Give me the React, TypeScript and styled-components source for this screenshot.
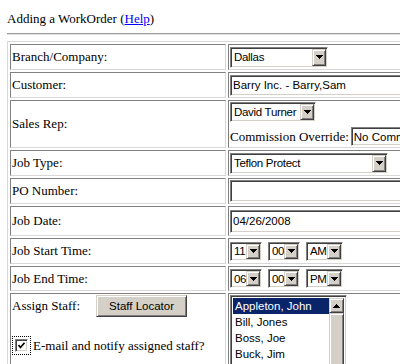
import React from "react";
import styled, { createGlobalStyle, css } from "styled-components";

const Global = createGlobalStyle`
  html, body {
    margin: 0;
    padding: 0;
    background: #ffffff;
    overflow: hidden;
  }
  body {
    font-family: "Liberation Serif", "Times New Roman", serif;
    font-size: 13px;
    color: #000000;
  }
`;

// classic windows sunken field
const sunken = css`
  box-sizing: border-box;
  border: 1px solid;
  border-color: #808080 #ffffff #ffffff #808080;
  box-shadow: inset 1px 1px 0 #404040, inset -1px -1px 0 #d4d0c8;
  background: #ffffff;
`;

const raised = css`
  box-sizing: border-box;
  border: 1px solid;
  border-color: #d4d0c8 #404040 #404040 #d4d0c8;
  box-shadow: inset 1px 1px 0 #ffffff, inset -1px -1px 0 #808080;
  background: #d4d0c8;
`;

const sansText = css`
  font-family: "Liberation Sans", Arial, sans-serif;
  font-size: 11.5px;
`;

const Page = styled.div`
  padding: 11px 0 0 7px;
  width: 540px;
`;

const Title = styled.div`
  line-height: 16px;
  height: 16px;
`;

const HelpLink = styled.a`
  color: #0000ff;
  text-decoration: underline;
`;

const Rule = styled.div`
  margin-top: 6px;
  border-top: 1px solid #9c9c9c;
  border-bottom: 1px solid #e2e2e2;
`;

const FormGrid = styled.div`
  margin-top: 6px;
  display: grid;
  grid-template-columns: 216px 250px;
  grid-template-rows: 26px 26px 48px 26px 26px 30px 26px 25px 120px;
  gap: 2px;
  padding: 2px;
  width: max-content;
  border: 1px solid;
  border-color: #d8d8d8 #808080 #808080 #d8d8d8;
`;

const cellBase = css`
  box-sizing: border-box;
  border: 1px solid;
  border-color: #808080 #d8d8d8 #d8d8d8 #808080;
  padding: 1px;
  overflow: hidden;
`;

const LabelCell = styled.div`
  ${cellBase};
  display: flex;
  align-items: center;
  white-space: nowrap;
`;

const FieldCell = styled.div<{ $gap?: number }>`
  ${cellBase};
  display: flex;
  align-items: center;
  gap: ${(p) => p.$gap ?? 0}px;
`;

const StackCell = styled.div<{ $top?: boolean }>`
  ${cellBase};
  display: flex;
  flex-direction: column;
  justify-content: ${(p) => (p.$top ? "flex-start" : "center")};
  align-items: flex-start;
  gap: 5px;
`;

const SelectBox = styled.div<{ $w: number; $h: number }>`
  ${sunken};
  ${sansText};
  width: ${(p) => p.$w}px;
  height: ${(p) => p.$h}px;
  flex: none;
  display: flex;
  align-items: stretch;
  padding: 1px;
`;

const SelectText = styled.span`
  flex: 1;
  display: flex;
  align-items: center;
  padding-left: 2px;
  letter-spacing: -0.3px;
  white-space: nowrap;
  overflow: hidden;
`;

const DropButton = styled.span`
  ${raised};
  width: 14px;
  flex: none;
  display: flex;
  align-items: center;
  justify-content: center;
`;

const TextField = styled.input<{ $w: number; $h: number }>`
  ${sunken};
  ${sansText};
  width: ${(p) => p.$w}px;
  height: ${(p) => p.$h}px;
  flex: none;
  margin: 0;
  padding: 0 2px;
  color: #000;
  outline: none;
`;

const InlineRow = styled.div`
  display: flex;
  align-items: center;
  gap: 2px;
  white-space: nowrap;
`;

const AssignLine = styled.div`
  display: flex;
  align-items: center;
  gap: 16px;
  height: 22px;
  white-space: nowrap;
`;

const PushButton = styled.button`
  ${raised};
  ${sansText};
  width: 91px;
  height: 22px;
  margin: 0;
  padding: 0;
  color: #000;
`;

const NotifyLine = styled.label`
  margin-top: 14px;
  display: flex;
  align-items: center;
  gap: 2px;
  white-space: nowrap;
`;

const FocusRing = styled.span`
  border: 1px dotted #000;
  padding: 2px;
  display: flex;
`;

const CheckBox = styled.span`
  ${sunken};
  width: 13px;
  height: 13px;
  display: flex;
  align-items: center;
  justify-content: center;
`;

const ListBox = styled.div`
  ${sunken};
  ${sansText};
  width: 117px;
  height: 110px;
  flex: none;
  display: flex;
  padding: 2px;
`;

const ListItems = styled.div`
  flex: 1;
  overflow: hidden;
`;

const ListItem = styled.div<{ $selected?: boolean }>`
  height: 16px;
  line-height: 16px;
  padding-left: 2px;
  white-space: nowrap;
  background: ${(p) => (p.$selected ? "#0a246a" : "transparent")};
  color: ${(p) => (p.$selected ? "#ffffff" : "#000000")};
`;

const ScrollBar = styled.div`
  width: 15px;
  flex: none;
  display: flex;
  flex-direction: column;
  background: #e8e6e2;
`;

const ScrollButton = styled.div`
  ${raised};
  height: 15px;
  flex: none;
  display: flex;
  align-items: center;
  justify-content: center;
`;

const ScrollThumb = styled.div`
  ${raised};
  flex: 1;
`;

function DownArrow() {
  return (
    <svg width="7" height="4" viewBox="0 0 7 4" shapeRendering="crispEdges">
      <polygon points="0,0 7,0 3.5,4" fill="#000" />
    </svg>
  );
}

function UpArrow() {
  return (
    <svg width="7" height="4" viewBox="0 0 7 4" shapeRendering="crispEdges">
      <polygon points="0,4 7,4 3.5,0" fill="#000" />
    </svg>
  );
}

function Select({ value, w, h = 21 }: { value: string; w: number; h?: number }) {
  return (
    <SelectBox $w={w} $h={h}>
      <SelectText>{value}</SelectText>
      <DropButton>
        <DownArrow />
      </DropButton>
    </SelectBox>
  );
}

const staff = ["Appleton, John", "Bill, Jones", "Boss, Joe", "Buck, Jim", "Christie, Charlie", "Davis, Ann"];

export default function App() {
  return (
    <Page>
      <Global />
      <Title>
        Adding a WorkOrder (<HelpLink href="#">Help</HelpLink>)
      </Title>
      <Rule />
      <FormGrid>
        <LabelCell>Branch/Company:</LabelCell>
        <FieldCell>
          <Select value="Dallas" w={98} />
        </FieldCell>

        <LabelCell>Customer:</LabelCell>
        <FieldCell>
          <TextField $w={240} $h={21} readOnly value="Barry Inc. - Barry,Sam" />
        </FieldCell>

        <LabelCell>Sales Rep:</LabelCell>
        <StackCell>
          <Select value="David Turner" w={86} h={20} />
          <InlineRow>
            Commission Override:
            <TextField $w={110} $h={19} readOnly value="No Commission" />
          </InlineRow>
        </StackCell>

        <LabelCell>Job Type:</LabelCell>
        <FieldCell>
          <Select value="Teflon Protect" w={158} />
        </FieldCell>

        <LabelCell>PO Number:</LabelCell>
        <FieldCell>
          <TextField $w={240} $h={22} readOnly value="" />
        </FieldCell>

        <LabelCell>Job Date:</LabelCell>
        <FieldCell>
          <TextField $w={240} $h={23} readOnly value="04/26/2008" />
        </FieldCell>

        <LabelCell>Job Start Time:</LabelCell>
        <FieldCell $gap={6}>
          <Select value="11" w={32} h={19} />
          <Select value="00" w={32} h={19} />
          <Select value="AM" w={37} h={19} />
        </FieldCell>

        <LabelCell>Job End Time:</LabelCell>
        <FieldCell $gap={6}>
          <Select value="06" w={32} h={19} />
          <Select value="00" w={32} h={19} />
          <Select value="PM" w={37} h={19} />
        </FieldCell>

        <StackCell $top>
          <AssignLine>
            Assign Staff:
            <PushButton type="button">Staff Locator</PushButton>
          </AssignLine>
          <NotifyLine>
            <FocusRing>
              <CheckBox>
                <svg width="9" height="9" viewBox="0 0 9 9">
                  <path d="M1.5 4 L3.5 6.5 L7.5 1.8" stroke="#000" strokeWidth="1.7" fill="none" />
                </svg>
              </CheckBox>
            </FocusRing>
            E-mail and notify assigned staff?
          </NotifyLine>
        </StackCell>
        <StackCell $top>
          <ListBox>
            <ListItems>
              {staff.map((name, i) => (
                <ListItem key={name} $selected={i === 0}>
                  {name}
                </ListItem>
              ))}
            </ListItems>
            <ScrollBar>
              <ScrollButton>
                <UpArrow />
              </ScrollButton>
              <ScrollThumb />
            </ScrollBar>
          </ListBox>
        </StackCell>
      </FormGrid>
    </Page>
  );
}
